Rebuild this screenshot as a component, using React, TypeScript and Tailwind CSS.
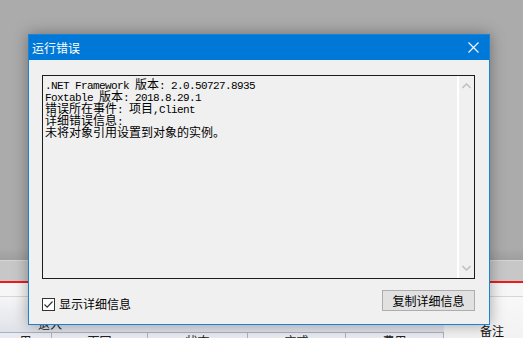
import React from "react";

const lines = [
  ".NET Framework 版本: 2.0.50727.8935",
  "Foxtable 版本: 2018.8.29.1",
  "错误所在事件: 项目,Client",
  "详细错误信息:",
  "未将对象引用设置到对象的实例。",
];

const isCjk = (ch: string) => /[\u3000-\u9fff\uff00-\uffef]/.test(ch);

function MixedLine({ text }: { text: string }) {
  const runs: { cjk: boolean; s: string }[] = [];
  for (const ch of text) {
    const c = isCjk(ch);
    const last = runs[runs.length - 1];
    if (last && last.cjk === c) last.s += ch;
    else runs.push({ cjk: c, s: ch });
  }
  return (
    <div className="h-[12px] leading-[12px] whitespace-pre text-black">
      {runs.map((r, i) =>
        r.cjk ? (
          <span key={i} className="font-['Noto_Sans_CJK_SC',sans-serif] text-[12px] leading-[12px]">
            {r.s}
          </span>
        ) : (
          <span
            key={i}
            className="font-['Liberation_Mono','DejaVu_Sans_Mono',monospace] text-[11px] leading-[12px] tracking-[-0.6px] text-black"
          >
            {r.s}
          </span>
        )
      )}
    </div>
  );
}

function Chevron({ up }: { up?: boolean }) {
  return (
    <svg width="9" height="6" viewBox="0 0 9 6">
      <path
        d={up ? "M0.5 5 L4.5 1 L8.5 5" : "M0.5 1 L4.5 5 L8.5 1"}
        fill="none"
        stroke="#c2c2c2"
        strokeWidth="1.6"
      />
    </svg>
  );
}

function Background() {
  const cols = [
    { w: 52, t: "用" },
    { w: 96, t: "下回" },
    { w: 100, t: "状态" },
    { w: 98, t: "方式" },
    { w: 98, t: "费用" },
  ];
  return (
    <div className="flex flex-col h-full">
      <div className="h-[248px] shrink-0 bg-[#ababab]" />
      <div className="h-[12px] shrink-0 bg-gradient-to-b from-[#ababab] to-[#9f9f9f]" />
      <div className="h-[21px] shrink-0 bg-[#c7c7c7] border-t border-[#d6d6d6]" />
      <div className="h-[2px] shrink-0 bg-[#ec1c1c]" />
      <div className="h-[14px] shrink-0 bg-[#f6f6f6] border-b border-[#d6d6d6]" />
      <div className="flex flex-1 min-h-0">
        <div className="w-[444px] flex flex-col">
          <div className="h-[35px] shrink-0 bg-gradient-to-b from-[#f5f5f6] to-[#dfe2e8] relative">
            <div className="absolute left-[38px] top-[20px] text-[12px] leading-[14px] text-[#222] font-['Noto_Sans_CJK_SC',sans-serif]">
              退入
            </div>
          </div>
          <div className="flex flex-1 min-h-0 overflow-hidden border-t border-[#a9b2c4] bg-[#e9ebf0]">
            {cols.map((c, i) => (
              <div
                key={i}
                style={{ width: c.w }}
                className="shrink-0 border-r border-[#a9b2c4] flex justify-center pt-[1px] text-[12px] leading-[14px] text-[#222] font-['Noto_Sans_CJK_SC',sans-serif]"
              >
                {c.t}
              </div>
            ))}
          </div>
        </div>
        <div className="flex-1 flex flex-col bg-gradient-to-b from-[#f8f8f8] to-[#f2f2f2]">
          <div className="flex-1" />
          <div className="h-[15px] shrink-0 pl-[36px] text-[12px] leading-[16px] text-[#111] font-['Noto_Sans_CJK_SC',sans-serif]">
            备注
          </div>
        </div>
      </div>
    </div>
  );
}

export default function App() {
  return (
    <div className="relative w-[523px] h-[338px] overflow-hidden bg-[#ababab]">
      <Background />

      <div className="absolute left-[28px] top-[34px] w-[462px] h-[291px] flex flex-col bg-[#f0f0f0] border border-[#1883d7] shadow-[0_0_14px_rgba(0,0,0,0.35)]">
        <div className="h-[25px] shrink-0 bg-[#0078d7] flex items-center justify-between pl-[3px] pr-[10px]">
          <span className="text-white text-[12px] font-['Noto_Sans_CJK_SC',sans-serif]">
            运行错误
          </span>
          <svg width="11" height="11" viewBox="0 0 11 11">
            <path d="M0.5 0.5 L10.5 10.5 M10.5 0.5 L0.5 10.5" stroke="#fff" strokeWidth="1.1" />
          </svg>
        </div>

        <div className="flex flex-col pt-[15px] px-[13px]">
          <div className="w-[433px] h-[204px] border border-[#1c1c1c] flex bg-[#f0f0f0]">
            <div className="flex-1 pl-[2px] pt-[1px] overflow-hidden">
              {lines.map((l, i) => (
                <MixedLine key={i} text={l} />
              ))}
            </div>
            <div className="w-[17px] border-l-2 border-white flex flex-col items-center justify-between py-[7px]">
              <Chevron up />
              <Chevron />
            </div>
          </div>

          <div className="flex items-start justify-between mt-[11px] pr-[1px]">
            <label className="flex items-center gap-[4px] mt-[7px]">
              <span className="w-[13px] h-[13px] border border-[#333] bg-white flex items-center justify-center">
                <svg width="11" height="11" viewBox="0 0 11 11">
                  <path d="M1.5 5.5 L4.2 8.2 L9.5 2.5" fill="none" stroke="#333" strokeWidth="1.2" />
                </svg>
              </span>
              <span className="text-[12px] leading-[14px] text-black font-['Noto_Sans_CJK_SC',sans-serif]">
                显示详细信息
              </span>
            </label>
            <button className="w-[93px] h-[21px] border border-[#adadad] bg-[#e1e1e1] text-[12px] leading-[14px] text-black font-['Noto_Sans_CJK_SC',sans-serif]">
              复制详细信息
            </button>
          </div>
        </div>
      </div>
    </div>
  );
}
